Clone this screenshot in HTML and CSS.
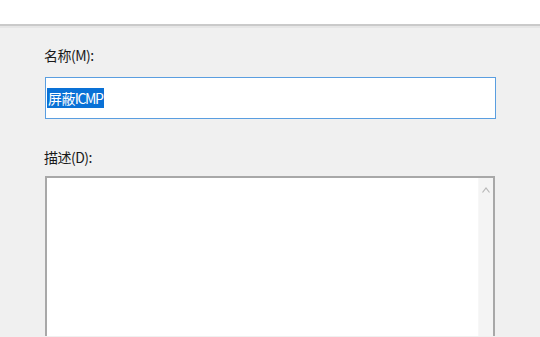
FILE: index.html
```html
<!DOCTYPE html>
<html lang="zh-CN">
<head>
<meta charset="utf-8">
<link rel="stylesheet" href="styles.css">
</head>
<body>
<div class="topbar"></div>
<div class="panel">
  <div class="field">
    <div class="label">名称(M):</div>
    <div class="input"><span class="sel">屏蔽<span class="latin">ICMP</span></span></div>
  </div>
  <div class="field desc">
    <div class="label">描述(D):</div>
    <div class="textarea">
      <div class="area-body"></div>
      <div class="scroll">
        <svg class="arrow" width="8" height="6" viewBox="0 0 8 6"><path d="M0.5 5.5 L4 1 L7.5 5.5" fill="none" stroke="#b8b8b8" stroke-width="1.2"/></svg>
      </div>
    </div>
  </div>
</div>
</body>
</html>
```
FILE: styles.css
```css
html, body {
  margin: 0;
  padding: 0;
  width: 540px;
  height: 337px;
  overflow: hidden;
  background: #f0f0f0;
  font-family: "Noto Sans CJK SC", "Noto Sans", sans-serif;
}
.topbar {
  height: 24px;
  background: #fff;
  border-bottom: 2px solid #cacaca;
  box-shadow: 0 2px 0 #e6e6e6;
}
.panel {
  padding: 19px 44px 0 45px;
}
.label {
  font-size: 14px;
  line-height: 20px;
  color: #1a1a1a;
  margin-left: -1px;
  letter-spacing: -0.5px;
}
.input {
  margin-top: 12px;
  height: 40px;
  width: 449px;
  border: 1px solid #5a9ee0;
  background: #fff;
  display: flex;
  align-items: center;
}
.sel {
  margin-left: 1px;
  background: #0a71d6;
  color: #fff;
  font-size: 14px;
  line-height: 20px;
  padding: 0 1px;
  letter-spacing: -0.6px;
}
.latin {
  letter-spacing: -1.4px;
  padding-right: 1px;
}
.desc {
  margin-top: 28px;
}
.textarea {
  margin-top: 9px;
  width: 446px;
  height: 158px;
  border-top: 2px solid #a8a8a8;
  border-left: 2px solid #a8a8a8;
  border-right: 2px solid #a8a8a8;
  background: #fff;
  display: flex;
}
.area-body {
  flex: 1;
}
.scroll {
  width: 15px;
  background: #f4f4f4;
  border-left: 1px solid #f7f7f7;
  display: flex;
  justify-content: center;
  padding-top: 9px;
  box-sizing: border-box;
}
.arrow {
  display: block;
}
```
